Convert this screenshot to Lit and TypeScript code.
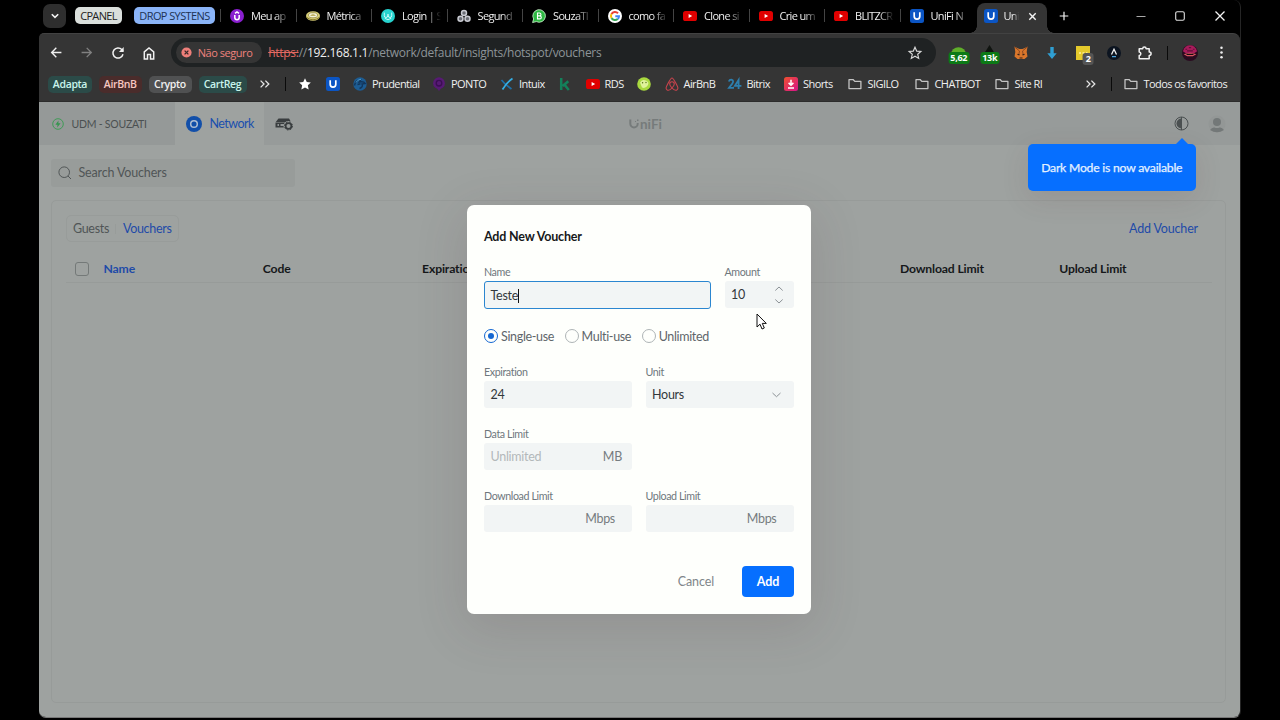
import { LitElement, html, css, svg, nothing } from "lit";
import { customElement } from "lit/decorators.js";

const uShield = svg`<rect width="14" height="14" rx="2.5" fill="#0b55c4"/><path d="M4.2 3.2v4.1a2.8 2.8 0 0 0 5.6 0V3.2" fill="none" stroke="#fff" stroke-width="1.7"/>`;
const youtube = svg`<rect y="2" width="14" height="10" rx="2.6" fill="#e00000"/><path d="M5.6 4.9v4.2L9.2 7z" fill="#fff"/>`;
const folder = svg`<path d="M1 2.7h4.3l1.5 1.7h6.1v7.2H1z" fill="none" stroke="#c4c4c4" stroke-width="1.3" stroke-linejoin="round"/>`;
const chevrons = svg`<path d="M2.6 3.6 6 7l-3.4 3.4M7.4 3.6 10.8 7l-3.4 3.4" fill="none" stroke="#e6e6e6" stroke-width="1.3"/>`;

const glyphs: Record<string, unknown> = {
  u: uShield,
  yt: youtube,
  folder,
  more: chevrons,
  udemy: svg`<circle cx="7" cy="7" r="7" fill="#8a1fd0"/><path d="M4.8 6v2.6a2.2 2.2 0 0 0 4.4 0V6M5 4.3l2-1.4 2 1.4" fill="none" stroke="#fff" stroke-width="1.5"/>`,
  bowl: svg`<ellipse cx="7" cy="7" rx="7" ry="4.8" fill="#d8cf7a"/><path d="M.5 8.3q6.500 5 13 0" stroke="#8b7d2c" fill="none"/><ellipse cx="7" cy="6.200" rx="4.500" ry="2.600" fill="#f5f3da" stroke="#8b7d2c" stroke-width=".7"/><path d="M4.500 6.500h5M5.500 5.300h3" stroke="#a6942f" stroke-width=".7"/>`,
  owl: svg`<circle cx="7" cy="7" r="7" fill="#27d3cf"/><path d="M3.300 3.600v3.200a1.700 1.700 0 0 0 3.400 0V5.200M10.700 3.600v3.200a1.700 1.700 0 0 1-3.400 0V5.200M3.800 9.300q3.200 2.800 6.400 0" fill="none" stroke="#d9fffd" stroke-width=".9"/>`,
  rings: svg`<g fill="#6b6e75" stroke="#c9cbd2" stroke-width="1.500"><circle cx="7" cy="4" r="2.500"/><circle cx="3.500" cy="9.700" r="2.500"/><circle cx="10.500" cy="9.700" r="2.500"/></g>`,
  whats: svg`<path d="M.6 13.500l1-3.500A6.300 6.300 0 1 1 4.300 12.600z" fill="#2db742" stroke="#d8ffd8" stroke-width=".8"/><path d="M5.500 4h2a1.400 1.400 0 0 1 0 2.900h-2zM5.500 6.900h2.300a1.500 1.500 0 0 1 0 3H5.500z" fill="none" stroke="#fff" stroke-width="1.100"/>`,
  google: svg`<circle cx="7" cy="7" r="7" fill="#fff"/><g fill="none" stroke-width="2"><path d="M10 4.200A4.100 4.100 0 0 0 3.500 5" stroke="#e94235"/><path d="M3.500 5a4.100 4.100 0 0 0 0 4.100" stroke="#fbbc04"/><path d="M3.500 9.100A4.100 4.100 0 0 0 9.700 10" stroke="#34a853"/><path d="M9.700 10A4 4 0 0 0 11 7.200H7.300" stroke="#4285f4"/></g>`,
  star: svg`<path d="M7 1.200l1.750 3.800 4.100.5-3 2.850.8 4.100L7 10.400l-3.650 2.050.8-4.100-3-2.850 4.100-.5z" fill="#fff"/>`,
  prud: svg`<circle cx="7" cy="7" r="6.700" fill="#1c5c93"/><path d="M1.500 8.500q1-5.500 6-5.500L6.300 5q4.500-1 6 1.500L9 7q1.500 3-2.500 4.500M4.500 7.500l3-.8" fill="none" stroke="#12365c" stroke-width="1.400"/><path d="M3 5.500Q4.500 2.600 8 2.200" fill="none" stroke="#4da0d4"/>`,
  ponto: svg`<circle cx="7" cy="6.200" r="5.900" fill="#571a74"/><path d="M7 14 3.500 9.500h7z" fill="#571a74"/><circle cx="7" cy="6.200" r="2.800" fill="none" stroke="#3a0f52" stroke-width="1.300"/>`,
  intuix: svg`<path d="M1.500 3 5 7l6.500 5" fill="none" stroke="#1d6fa8" stroke-width="1.700"/><path d="M12.500 1.500Q7 5 2.500 12.500" fill="none" stroke="#34aee4" stroke-width="1.700"/>`,
  k: svg`<path d="M3.200 1v12M10.300 4.200 4.600 9M6.600 7.700l4.200 5.300" fill="none" stroke="#13805a" stroke-width="2.500"/>`,
  pear: svg`<circle cx="7" cy="7" r="6.800" fill="#a9d93f"/><path d="M3 5.500Q5 2 8 3.300q4.500 1 3 4.700Q8.500 12 5 10.500z" fill="#dff29a"/><circle cx="5.600" cy="5.700" r=".7" fill="#56721b"/><circle cx="9" cy="5.500" r=".7" fill="#56721b"/>`,
  bnb: svg`<path d="M7 1C5.500 1 1.100 9.800 1.100 11a2.300 2.300 0 0 0 2.300 2.300C5.700 13.300 9.300 8.600 9.300 7a2.300 2.300 0 0 0-4.600 0c0 1.600 3.600 6.300 5.900 6.300A2.300 2.300 0 0 0 12.900 11C12.900 9.800 8.500 1 7 1z" fill="none" stroke="#c8434d" stroke-width="1.100"/>`,
  bitrix: svg`<path d="M.8 4.500Q1.500 2.600 3.300 2.700q3.300.7.600 4.400L1 10.800h5M10.600 12V2.900L6.900 8.800h6.500" fill="none" stroke="#2d7fae" stroke-width="1.800"/>`,
  shorts: svg`<defs><linearGradient id="sg" x2="1" y2="1"><stop stop-color="#f0502e"/><stop offset="1" stop-color="#d6148b"/></linearGradient></defs><rect width="14" height="14" rx="2.500" fill="url(#sg)"/><path d="M7 2.800v5M4.600 5.900 7 8.300l2.400-2.400M4 11h6" fill="none" stroke="#fff" stroke-width="1.500"/>`,
  back: svg`<path d="M12.300 7H2M6.800 2 1.800 7l5 5" fill="none" stroke="#f0f0f0" stroke-width="1.500"/>`,
  fwd: svg`<path d="M1.700 7H12M7.200 2l5 5-5 5" fill="none" stroke="#818181" stroke-width="1.400"/>`,
  reload: svg`<path d="M12 8.300A5.100 5.100 0 1 1 10.800 3.500L12 4.900" fill="none" stroke="#f0f0f0" stroke-width="1.500"/><path d="M12.700 1v5H7.900z" fill="#f0f0f0"/>`,
  home: svg`<path d="M2.300 5.800 7 1.900l4.700 3.900V13H8.500V8.500h-3V13H2.300z" fill="none" stroke="#f0f0f0" stroke-width="1.500"/>`,
  unsafe: svg`<circle cx="7" cy="7" r="6.500" fill="#ee7f7a"/><path d="M4.600 4.600l4.800 4.800M9.400 4.600 4.600 9.400" stroke="#3a2a2a" stroke-width="1.700"/>`,
  starLine: svg`<path d="M7 1.200l1.700 3.900 4.200.4-3.200 2.800 1 4.100L7 10.200l-3.700 2.200 1-4.100L1.100 5.500l4.200-.4z" fill="none" stroke="#d8d8d8" stroke-width="1.150"/>`,
  fox: svg`<path d="M.5.800 5.500 3h3l5-2.200-.8 5.200.8 4.500-3 2.500H3.500l-3-2.500L1.300 6z" fill="#d9762b"/><path d="M.5.800 5.500 5 4.700 9M13.500.8 8.500 5l.8 4" fill="none" stroke="#8b4a23"/><path d="M3.500 8.200l2 .8M10.500 8.200l-2 .8M5.500 12h3" stroke="#30201a" stroke-width="1.200"/>`,
  down: svg`<path d="M5.300 1h3.400v6.300h3L7 13 2.300 7.300h3z" fill="#2f9fd3"/>`,
  note: svg`<path d="M0 0h14v10l-4 4H0z" fill="#e5ca2c"/><path d="M3 7h2M6.500 7h2M10 7h1.500" stroke="#fff3a5" stroke-width="1.300"/>`,
  lamp: svg`<circle cx="7" cy="7" r="7" fill="#0c1420"/><path d="M4.500 8.500 7 3.300l2.500 5.200" fill="none" stroke="#f2f2f2" stroke-width="1.300"/><path d="M5 10.700h4" stroke="#4aa2dd" stroke-width="1.200"/>`,
  puzzle: svg`<path d="M1.200 2.800h3.500c0-2.300 3.400-2.300 3.400 0h3.100v3.300c2.500 0 2.500 3.300 0 3.300v3.400h-10V9.500c2.200-.2 2.200-3.200 0-3.400z" fill="none" stroke="#f0f0f0" stroke-width="1.500" stroke-linejoin="round"/>`,
  avatar: svg`<circle cx="7" cy="7" r="7" fill="#2b0b20"/><path d="M.8 5.500Q2.500.3 7 .3t6.200 5.200L11 7H3z" fill="#a81c5b"/><path d="M3 3.700h1.500M6 2.300h2M9.500 3.700H11M4.500 5.200h5" stroke="#5e1038"/><path d="M1.500 8.200Q7 5.500 12.500 8.200L9.500 9.800h-5z" fill="#d8545f"/><path d="M4 8.200h6" stroke="#190711" stroke-width="1.200"/>`,
  dots: svg`<g fill="#f0f0f0"><circle cx="7" cy="2" r="1.350"/><circle cx="7" cy="7" r="1.350"/><circle cx="7" cy="12" r="1.350"/></g>`,
  green: svg`<path d="M0 9a7 7 0 0 1 14 0z" fill="#5fae2a"/>`,
  spade: svg`<path d="M7 0l5 8H2z" fill="#101410"/>`,
  plus: svg`<path d="M7 1v12M1 7h12" stroke="#f4f4f4" stroke-width="1.700"/>`,
  close: svg`<path d="M2.500 2.500l9 9M11.500 2.500l-9 9" stroke="#f4f4f4" stroke-width="1.300"/>`,
  closeTab: svg`<path d="M2 2l10 10M12 2 2 12" stroke="#f4f4f4" stroke-width="2.200"/>`,
  min: svg`<path d="M2.500 7.500h9" stroke="#a8a8a8" stroke-width="1"/>`,
  max: svg`<rect x="2.700" y="2.700" width="8.600" height="8.600" rx="1.600" fill="none" stroke="#e0e0e0" stroke-width="1.100"/>`,
  chev: svg`<path d="M2.500 4.500 7 9l4.500-4.500" fill="none" stroke="#f4f4f4" stroke-width="2.200"/>`,
};

const icon = (name: string, size = 14, cls = "") =>
  html`<svg class="ic ${cls}" width=${size} height=${size} viewBox="0 0 14 14">${glyphs[name]}</svg>`;

const tabs: [string, string][] = [
  ["udemy", "Meu ap"],
  ["bowl", "Métrica"],
  ["owl", "Login | S"],
  ["rings", "Segund"],
  ["whats", "SouzaTI"],
  ["google", "como fa"],
  ["yt", "Clone si"],
  ["yt", "Crie um"],
  ["yt", "BLITZCR"],
  ["u", "UniFi N"],
];

// icon, label, slot width
const bookmarks: [string, string, number][] = [
  ["star", "", 28],
  ["u", "", 27],
  ["prud", "Prudential", 79],
  ["ponto", "PONTO", 68],
  ["intuix", "Intuix", 57.5],
  ["k", "", 28],
  ["yt", "RDS", 51],
  ["pear", "", 28],
  ["bnb", "AirBnB", 63],
  ["bitrix", "Bitrix", 56.5],
  ["shorts", "Shorts", 63.5],
  ["folder", "SIGILO", 67],
  ["folder", "CHATBOT", 80],
  ["folder", "Site RI", 89],
];

@customElement("browser-chrome")
class BrowserChrome extends LitElement {
  static styles = css`
    :host {
      display: block;
      font: 11px/16px "Open Sans", "Noto Sans", sans-serif;
      letter-spacing: -0.3px;
      color: #f0f0f0;
      white-space: nowrap;
    }
    .ic { display: block; flex: none; overflow: visible; }
    .strip { display: flex; align-items: center; height: 33px; padding-left: 4px; }
    .search { width: 23px; height: 24px; border-radius: 7px; background: #2e2e2e; display: grid; place-items: center; margin-top: -2px; }
    .group { box-sizing: border-box; height: 17px; border-radius: 5px; text-align: center; color: #222; line-height: 17px; margin-top: -2px; }
    .cpanel { width: 47px; margin-left: 9px; background: #dadfdc; letter-spacing: -0.65px; }
    .drop { width: 81px; margin-left: 12px; background: #8ab4f8; letter-spacing: -0.6px; color: #203253; }
    .tabs { display: flex; margin-left: 5px; }
    .tab { width: 75.500px; box-sizing: border-box; display: flex; align-items: center; padding-left: 9px; margin-top: -2px; border-left: 1px solid #444; height: 13px; }
    .name { margin-left: 7px; width: 39px; letter-spacing: -0.650px; mask-image: linear-gradient(90deg, #000 60%, transparent 100%); }
    .active { width: 70px; height: 30px; align-self: flex-end; background: #353535; border-radius: 8px 8px 0 0; display: flex; align-items: center; box-sizing: border-box; padding-left: 7px; margin-left: 1.500px; position: relative; }
    .active::before, .active::after { content: ""; position: absolute; bottom: 0; width: 7px; height: 7px; }
    .active::before { right: 100%; background: radial-gradient(circle at 0 0, transparent 6.500px, #353535 7px); }
    .active::after { left: 100%; background: radial-gradient(circle at 100% 0, transparent 6.500px, #353535 7px); }
    .active .ic, .active .name { position: relative; top: -2px; }
    .active .name { width: 15px; margin-left: 6px; }
    .active .x { margin-left: 9px; }
    .plus { margin-left: 12px; margin-top: -2px; }
    .wins { display: flex; gap: 25.500px; margin-left: 65px; margin-top: -2px; }
    .bar { background: #353535; border-top-right-radius: 7px; border-top-left-radius: 5px; height: 69px; box-sizing: border-box; border-top: 1px solid #424242; border-bottom: 1px solid #2c2c2c; }
    .nav { display: flex; align-items: center; height: 37px; padding: 0 0 0 11px; }
    .nav > .step { margin-right: 17.300px; }
    .omni { flex: none; width: 765px; height: 29px; border-radius: 15px; background: #1f2223; margin-left: -2px; box-sizing: border-box; padding: 0 14px 0 5px; display: flex; align-items: center; font-size: 12px; letter-spacing: -0.280px; }
    .unsafe { width: 86px; height: 21px; border-radius: 11px; background: #353535; display: flex; align-items: center; padding-left: 5px; box-sizing: border-box; gap: 5.500px; font-size: 11px; color: #ee827d; letter-spacing: -0.450px; margin-right: 6px; }
    .url { flex: 1; color: #8d9498; }
    .url s { color: #e46962; }
    .url b { font-weight: 400; color: #f0f0f0; }
    .exts { display: flex; align-items: center; flex: 1; }
    .ext { flex: none; width: 31px; display: grid; place-items: center; position: relative; }
    .exts .ext:first-child { margin-left: 7px; }
    .exts .ext:last-child { margin-left: 7.500px; }
    .badge { position: absolute; top: 7px; left: 50%; transform: translateX(-50%); height: 12px; padding: 0 2px; border-radius: 3px; background: #0c7a16; color: #fff; font: bold 9px/12px "Open Sans", sans-serif; letter-spacing: -0.300px; }
    .two { left: 21px; background: #555; padding: 0 3px; }
    .sep { flex: none; width: 1px; height: 14px; background: #0a0a0a; }
    .nav .sep { margin: 0 14px 0 7px; }
    .marks { display: flex; align-items: center; height: 26px; padding-left: 9px; letter-spacing: -0.570px; }
    .chip { height: 17px; line-height: 17px; border-radius: 5px; text-align: center; font-weight: 600; margin-right: 7px; font-size: 10.500px; letter-spacing: -0.350px; }
    .teal { background: #2b4b48; color: #c9f4ec; }
    .red { background: #4a2c2b; color: #f8c7c1; }
    .grey { background: #505152; }
    .mark { flex: none; display: flex; align-items: center; gap: 5px; }
    .mark.wide { gap: 6px; }
    .more1 { margin: 0 13px 0 4.500px; }
    .marks .sep { margin-right: 12px; }
    .more2 { margin-right: 13px; }
  `;
  render() {
    return html`
      <div class="strip">
        <div class="search">${icon("chev", 10)}</div>
        <div class="group cpanel">CPANEL</div>
        <div class="group drop">DROP SYSTENS</div>
        <div class="tabs">
          ${tabs.map(([g, t]) => html`<div class="tab">${icon(g)}<span class="name">${t}</span></div>`)}
        </div>
        <div class="active">${icon("u")}<span class="name">Uni</span>${icon("closeTab", 9, "x")}</div>
        ${icon("plus", 10, "plus")}
        <div class="wins">${icon("min")}${icon("max")}${icon("close")}</div>
      </div>
      <div class="bar">
        <div class="nav">
          ${icon("back", 13, "step")}${icon("fwd", 13, "step")}${icon("reload", 14, "step")}${icon("home", 14, "step")}
          <div class="omni">
            <div class="unsafe">${icon("unsafe", 11)}<span>Não seguro</span></div>
            <div class="url"><s>https:</s>//<b>192.168.1.1</b>/network/default/insights/hotspot/vouchers</div>
            ${icon("starLine")}
          </div>
          <div class="exts">
            <div class="ext">${icon("green", 15)}<span class="badge">5,62</span></div>
            <div class="ext">${icon("spade", 15)}<span class="badge">13k</span></div>
            <div class="ext">${icon("fox")}</div>
            <div class="ext">${icon("down")}</div>
            <div class="ext">${icon("note")}<span class="badge two">2</span></div>
            <div class="ext">${icon("lamp")}</div>
            <div class="ext">${icon("puzzle")}</div>
            <div class="sep"></div>
            ${icon("avatar", 16)}
            <div class="ext">${icon("dots", 13)}</div>
          </div>
        </div>
        <div class="marks">
          <div class="chip teal" style="width:44px">Adapta</div>
          <div class="chip red" style="width:42.5px">AirBnB</div>
          <div class="chip grey" style="width:43px">Crypto</div>
          <div class="chip teal" style="width:48px">CartReg</div>
          ${icon("more", 14, "more1")}
          <div class="sep"></div>
          ${bookmarks.map(
            ([g, t, w]) => html`<div class="mark ${g === "folder" ? "wide" : ""}" style="width:${w}px">${icon(g)}${t ? html`<span>${t}</span>` : nothing}</div>`,
          )}
          ${icon("more", 14, "more2")}
          <div class="sep"></div>
          <div class="mark wide">${icon("folder")}<span>Todos os favoritos</span></div>
        </div>
      </div>
    `;
  }
}

@customElement("voucher-dialog")
class VoucherDialog extends LitElement {
  static styles = css`
    :host {
      display: flex;
      flex-direction: column;
      box-sizing: border-box;
      width: 344px;
      height: 409px;
      padding: 23px 17px 17px;
      border-radius: 7px;
      background: #fefffc;
      color: #333a3f;
      font: 12.500px/16px Lato, sans-serif;
      letter-spacing: -0.280px;
      font-variant-ligatures: none;
      box-shadow: 0 12px 50px 4px rgba(80, 50, 55, 0.14);
    }
    .title { font-weight: 700; font-size: 12.500px; line-height: 17px; letter-spacing: -0.180px; color: #17191b; margin-bottom: 19px; }
    .row { display: grid; grid-template-columns: 148px 148px; column-gap: 13.500px; margin-bottom: 18px; }
    .row.first { grid-template-columns: 226.500px 69.500px; column-gap: 14px; margin-bottom: 19px; }
    .label { font-size: 10.700px; line-height: 16px; margin-bottom: 1px; color: #6f777c; letter-spacing: -0.400px; }
    .input { box-sizing: border-box; height: 27px; border-radius: 3px; background: #f2f5f5; padding: 1px 10px 0 6.500px; display: flex; align-items: center; justify-content: space-between; color: #33383c; }
    .focus { height: 28px; border: 1.500px solid #2b86d0; padding-left: 5.500px; justify-content: flex-start; }
    .caret { width: 1px; height: 14px; background: #111; }
    .hint { color: #b3b8ba; }
    .unit { color: #767c80; }
    .unit.far { margin-left: auto; margin-right: 7px; }
    .icon { fill: none; stroke: #8c9296; }
    .radios { display: flex; margin-bottom: 20px; color: #5e666b; letter-spacing: -0.330px; }
    .radio { display: flex; align-items: center; gap: 3px; margin-right: 10.500px; }
    .radio span:last-child { position: relative; top: 0.500px; }
    .ring { box-sizing: border-box; width: 14px; height: 14px; border-radius: 50%; border: 1px solid #aeb4b6; display: grid; place-items: center; }
    .ring.on { border: 1.500px solid #1467d2; }
    .ring.on::after { content: ""; width: 6px; height: 6px; border-radius: 50%; background: #1467d2; }
    .foot { display: flex; justify-content: flex-end; align-items: center; margin-top: auto; color: #80868a; letter-spacing: -0.100px; }
    .add { width: 52px; height: 31px; margin-left: 28px; border-radius: 4px; background: #066fff; color: #fff; font-weight: 700; text-align: center; line-height: 31px; }
  `;
  render() {
    return html`
      <div class="title">Add New Voucher</div>
      <div class="row first">
        <div><div class="label">Name</div><div class="input focus">Teste<span class="caret"></span></div></div>
        <div>
          <div class="label">Amount</div>
          <div class="input">10<svg class="icon" width="10" height="20" viewBox="0 0 10 20"><path d="M1.300 5.500 5 2l3.700 3.500M1.300 14.500 5 18l3.700-3.500" /></svg></div>
        </div>
      </div>
      <div class="radios">
        <div class="radio"><span class="ring on"></span><span>Single-use</span></div>
        <div class="radio"><span class="ring"></span><span>Multi-use</span></div>
        <div class="radio"><span class="ring"></span><span>Unlimited</span></div>
      </div>
      <div class="row">
        <div><div class="label">Expiration</div><div class="input">24</div></div>
        <div>
          <div class="label">Unit</div>
          <div class="input">Hours<svg class="icon" width="14" height="10" viewBox="0 0 14 10"><path d="M2.500 3 6.500 6.700 10.500 3" /></svg></div>
        </div>
      </div>
      <div class="row">
        <div><div class="label">Data Limit</div><div class="input"><span class="hint">Unlimited</span><span class="unit">MB</span></div></div>
      </div>
      <div class="row">
        <div><div class="label">Download Limit</div><div class="input"><span class="unit far">Mbps</span></div></div>
        <div><div class="label">Upload Limit</div><div class="input"><span class="unit far">Mbps</span></div></div>
      </div>
      <div class="foot"><span>Cancel</span><span class="add">Add</span></div>
    `;
  }
}

@customElement("app-root")
class AppRoot extends LitElement {
  static styles = css`
    :host { display: block; width: 1280px; height: 720px; background: #000; overflow: hidden; position: relative; font: 12.500px/16px Lato, sans-serif; letter-spacing: -0.160px; font-variant-ligatures: none; }
    .window { box-sizing: border-box; width: 1202px; height: 718px; margin-left: 39px; border-right: 1px solid #252525; border-bottom: 1px solid #777; border-radius: 0 7px 7px 7px; overflow: hidden; }
    .page { height: 615px; background: #9ea2a0; position: relative; overflow: hidden; color: #505556; }
    .head { display: grid; grid-template-columns: 136px 89px 1fr 44px; height: 43px; background: #979b9a; align-items: stretch; }
    .head > div { display: flex; align-items: center; }
    .console { gap: 7.500px; padding-left: 13px; font-size: 10.500px; background: #959998; color: #4b5051; letter-spacing: -0.240px; }
    .net { gap: 7.500px; padding-left: 11px; background: #9ea2a0; color: #1a4fae; letter-spacing: -0.550px; }
    .dev { padding-left: 10.500px; }
    .logo { margin-left: 336.500px; display: flex; align-items: center; gap: 1px; font-weight: 700; font-size: 13.500px; color: #767b7b; letter-spacing: 0; }
    .moon { margin-left: auto; margin-right: 7px; }
    .user { padding-left: 11.500px; }
    .search { width: 244px; height: 28px; margin: 14px 0 13px 12px; box-sizing: border-box; padding-left: 7px; display: flex; align-items: center; gap: 6.500px; background: #989c9a; border-radius: 3px; }
    .panel { box-sizing: border-box; width: 1175px; height: 503px; margin-left: 12px; border: 1px solid #979b99; border-radius: 5px; padding: 14px 13px 0 14px; }
    .top { display: flex; align-items: center; justify-content: space-between; height: 27px; padding-right: 14px; }
    .seg { box-sizing: border-box; width: 113px; height: 27px; border: 1px solid #989c9a; border-radius: 5px; display: flex; align-items: center; padding: 0 6.500px 0 6px; justify-content: space-between; letter-spacing: -0.320px; }
    .seg i { width: 1px; height: 10px; background: #989c9a; margin-left: -1px; }
    .blue { color: #1f4ba8; }
    .cols { display: grid; grid-template-columns: 29px repeat(7, 159.300px); height: 41px; padding-left: 8.500px; box-sizing: border-box; border-bottom: 1px solid #979b99; align-items: center; font-weight: 700; font-size: 12.200px; color: #15181a; padding-top: 14px; overflow: hidden; }
    .box { width: 12px; height: 12px; border: 1px solid #747978; border-radius: 3px; }
    .tip { position: absolute; left: 989px; top: 42px; width: 167.500px; height: 47px; border-radius: 5px; background: #066fff; color: #e4f1ff; text-align: center; line-height: 47px; letter-spacing: -0.220px; font-size: 12.200px; box-shadow: 0 8px 28px rgba(90, 50, 50, 0.12); -webkit-text-stroke: 0.250px #e4f1ff; }
    .tip::before { content: ""; position: absolute; right: 7px; top: -6px; border: 7px solid transparent; border-top: 0; border-bottom-color: #066fff; }
    voucher-dialog { position: absolute; left: 428px; top: 103px; }
    .cursor { position: absolute; left: 756px; top: 313px; }
  `;
  render() {
    return html`
      <div class="window">
        <browser-chrome></browser-chrome>
        <div class="page">
          <div class="head">
            <div class="console">
              <svg width="12" height="12" viewBox="0 0 12 12"><circle cx="6" cy="6" r="5.300" fill="none" stroke="#409b57" /><path d="M6.500 2.500 3.400 6.700h2.100L5.200 9.500 8.600 5.300H6.400z" fill="#35964f" /></svg>
              <span>UDM - SOUZATI</span>
            </div>
            <div class="net">
              <svg width="16" height="16" viewBox="0 0 16 16"><circle cx="8" cy="8" r="8" fill="#124fa9" /><circle cx="8" cy="8" r="3.300" fill="none" stroke="#aebdd1" stroke-width="1.500" /></svg>
              <span>Network</span>
            </div>
            <div class="dev">
              <svg width="18" height="14" viewBox="0 0 18 14"><path d="M3.500 1.500h10.500l2 3.500H.8z" fill="#393d3f" /><path d="M.5 5.500h12v5H.5z" fill="#393d3f" /><path d="M2.500 8h1.500M5.500 8H9" stroke="#b1b5b5" stroke-width="1.300" /><circle cx="13.500" cy="9" r="5" fill="#979b9a" /><circle cx="13.500" cy="9" r="2.900" fill="none" stroke="#393d3f" stroke-width="1.700" /><circle cx="13.500" cy="9" r="4" fill="none" stroke="#393d3f" stroke-dasharray="1.600 1.540" /></svg>
              <span class="logo">
                <svg width="10" height="11" viewBox="0 0 10 11"><path d="M1.300 1.500v4.300a3.700 3.700 0 0 0 7.400 0V5" fill="none" stroke="#767b7b" stroke-width="2" /><path d="M8 1.500h1.500V3H8zM6 3h1v1H6z" fill="#767b7b" /></svg>niFi</span>
              <svg class="moon" width="15" height="15" viewBox="0 0 15 15"><circle cx="7.500" cy="7.500" r="6.500" fill="none" stroke="#4b5051" /><path d="M7.500 2.500a5 5 0 0 0 0 10z" fill="#4b5051" /><path d="M7.500 1v13" stroke="#4b5051" /></svg>
            </div>
            <div class="user">
              <svg width="18" height="18" viewBox="0 0 18 18"><circle cx="9" cy="9" r="8.500" fill="#939796" /><circle cx="9" cy="7" r="4" fill="#737878" /><path d="M2 15Q4 12 6.500 12.500q2.500 1 5 0 2.500-.5 4.500 2.500Q9 19.500 2 15z" fill="#737878" /></svg>
            </div>
          </div>
          <div class="search">
            <svg width="14" height="14" viewBox="0 0 14 14" fill="none" stroke="#515657"><circle cx="6.200" cy="6.200" r="5.300" /><path d="m10 10 3 3" /></svg>
            <span>Search Vouchers</span>
          </div>
          <div class="panel">
            <div class="top">
              <div class="seg"><span>Guests</span><i></i><span class="blue">Vouchers</span></div>
              <span class="blue">Add Voucher</span>
            </div>
            <div class="cols">
              <span class="box"></span><span class="blue">Name</span><span>Code</span><span>Expiration</span><span></span><span></span><span>Download Limit</span><span>Upload Limit</span>
            </div>
          </div>
          <div class="tip">Dark Mode is now available</div>
          <voucher-dialog></voucher-dialog>
        </div>
      </div>
      <svg class="cursor" width="12" height="18" viewBox="0 0 12 18"><path d="M1 1v13l3-2.800 2 4.800 2.300-1-2-4.600h4z" fill="#fff" stroke="#111" /></svg>
    `;
  }
}
